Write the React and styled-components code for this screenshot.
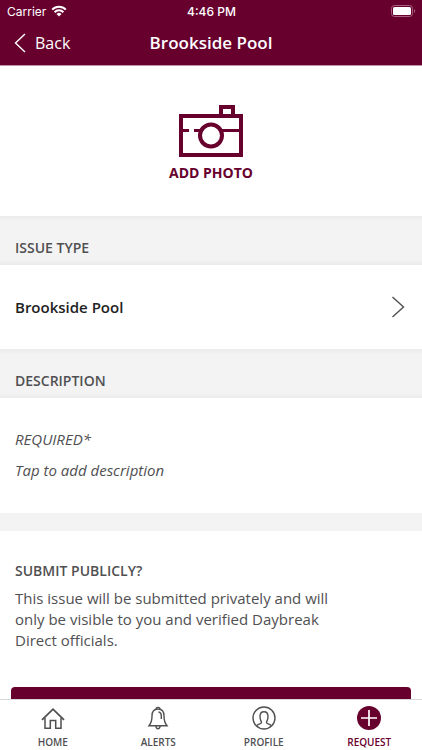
import React, { useState } from 'react'
import styled, { createGlobalStyle } from 'styled-components'

const tabs = [
  { id: 'home', label: 'HOME', Icon: HomeIcon },
  { id: 'alerts', label: 'ALERTS', Icon: BellIcon },
  { id: 'profile', label: 'PROFILE', Icon: ProfileIcon },
  { id: 'request', label: 'REQUEST', Icon: RequestIcon },
]

export default function App() {
  const [activeTab, setActiveTab] = useState('request')
  const [description, setDescription] = useState('')

  return (
    <>
      <GlobalStyle />
      <Screen>
        <Header>
          <StatusBar>
            <Carrier>
              Carrier
              <WifiIcon />
            </Carrier>
            <Clock>4:46 PM</Clock>
            <Battery>
              <BatteryIcon />
            </Battery>
          </StatusBar>
          <NavBar>
            <BackButton type="button">
              <svg width="12" height="20" viewBox="0 0 12 20" fill="none" stroke="currentColor" strokeWidth="1.4">
                <path d="M11 1L1.5 10L11 19" />
              </svg>
              Back
            </BackButton>
            <Title>Brookside Pool</Title>
          </NavBar>
        </Header>

        <Content>
          <PhotoButton type="button">
            <CameraIcon />
            ADD PHOTO
          </PhotoButton>

          <SectionHeader>ISSUE TYPE</SectionHeader>
          <IssueRow type="button">
            Brookside Pool
            <svg width="14" height="22" viewBox="0 0 14 22" fill="none" stroke="#505052" strokeWidth="1.4">
              <path d="M1.5 1L12.5 11L1.5 21" />
            </svg>
          </IssueRow>

          <SectionHeader>DESCRIPTION</SectionHeader>
          <DescriptionBox>
            <label htmlFor="description">REQUIRED*</label>
            <textarea
              id="description"
              placeholder="Tap to add description"
              value={description}
              onChange={(e) => setDescription(e.target.value)}
            />
          </DescriptionBox>

          <Divider />
          <SubmitSection>
            <SubmitTitle>SUBMIT PUBLICLY?</SubmitTitle>
            <SubmitText>
              This issue will be submitted privately and will only be visible to you and verified Daybreak Direct officials.
            </SubmitText>
            <SubmitButton type="button" aria-label="Submit" />
          </SubmitSection>
        </Content>

        <TabBar>
          {tabs.map(({ id, label, Icon }) => (
            <Tab key={id} type="button" $active={activeTab === id} onClick={() => setActiveTab(id)}>
              <Icon />
              {label}
            </Tab>
          ))}
        </TabBar>
      </Screen>
    </>
  )
}

function WifiIcon() {
  return (
    <svg width="16" height="12" viewBox="0 0 16 12" fill="none" stroke="#fff" strokeWidth="2">
      <path d="M1.2 4.6A9.6 9.6 0 0 1 14.8 4.6" />
      <path d="M3.6 7.2A6.2 6.2 0 0 1 12.4 7.2" />
      <path d="M8 11.5L5.5 9A3.5 3.5 0 0 1 10.5 9Z" fill="#fff" stroke="none" />
    </svg>
  )
}

function BatteryIcon() {
  return (
    <svg width="25" height="12" viewBox="0 0 25 12" fill="none">
      <rect x="0.5" y="0.5" width="21" height="11" rx="3" stroke="#a8607f" />
      <rect x="2" y="2" width="18" height="8" rx="1.5" fill="#fff" />
      <path d="M23 4.2C24.6 4.6 24.6 7.4 23 7.8Z" fill="#a8607f" />
    </svg>
  )
}

function CameraIcon() {
  return (
    <svg width="64" height="52" viewBox="0 0 64 52" fill="none" stroke="currentColor" strokeWidth="4">
      <path d="M2 11H62V50H2Z" />
      <path d="M42 11V2H54V11" />
      <path d="M2 25.5H10M15 25.5H22M43 25.5H62" strokeWidth="3" />
      <circle cx="32" cy="30.5" r="11" />
    </svg>
  )
}

function HomeIcon() {
  return (
    <svg width="24" height="24" viewBox="0 0 24 24" fill="none" stroke="currentColor" strokeWidth="1.5">
      <path d="M1 13.8L12 3.2L23 13.8" strokeWidth="1.8" />
      <path d="M4 12V22.2H9.3V14.5H14.7V22.2H20V12" />
    </svg>
  )
}

function BellIcon() {
  return (
    <svg width="24" height="24" viewBox="0 0 24 24" fill="none" stroke="currentColor" strokeWidth="1.4">
      <path d="M3 19.8C5.5 16.8 6 15 6 10C6 5.5 8.5 3 12 3S18 5.5 18 10C18 15 18.5 16.8 21 19.8Z" />
      <path d="M10 3.4C10 .7 14 .7 14 3.4" />
      <path d="M10 20C10 23.7 14 23.7 14 20" />
      <path d="M12.5 6C14.7 6.3 15.3 7.5 15.3 10V13" />
    </svg>
  )
}

function ProfileIcon() {
  return (
    <svg width="24" height="24" viewBox="0 0 24 24" fill="none" stroke="currentColor" strokeWidth="1.4">
      <circle cx="12" cy="12" r="11" />
      <path d="M4.5 19.8C5.5 18.2 9.5 18 9.5 16.5C9.5 15.2 8 14.5 8 10.5C8 7.5 9.5 5.8 12 5.8S16 7.5 16 10.5C16 14.5 14.5 15.2 14.5 16.5C14.5 18 18.5 18.2 19.5 19.8" />
    </svg>
  )
}

function RequestIcon() {
  return (
    <svg width="24" height="24" viewBox="0 0 24 24" fill="none">
      <circle cx="12" cy="12" r="12" fill="currentColor" />
      <path d="M12 4V20M4 12H20" stroke="#fff" strokeWidth="1.7" />
    </svg>
  )
}

const GlobalStyle = createGlobalStyle`
  * {
    box-sizing: border-box;
  }
  body {
    margin: 0;
    background: #fff;
    color: #505052;
    font-family: 'Open Sans', sans-serif;
  }
  button, textarea {
    margin: 0;
    padding: 0;
    border: 0;
    background: none;
    color: inherit;
    font-family: inherit;
  }
  button {
    cursor: pointer;
  }
  svg {
    display: block;
    flex-shrink: 0;
  }
`

const Screen = styled.div`
  display: flex;
  flex-direction: column;
  height: 100vh;
`

const Header = styled.header`
  flex-shrink: 0;
  background: #68002e;
  color: #fff;
  border-bottom: 1px solid #c391a7;
`

const StatusBar = styled.div`
  display: grid;
  grid-template-columns: 1fr auto 1fr;
  align-items: center;
  height: 22px;
  padding: 0 6px 0 7px;
  font-family: Inter, sans-serif;
  font-size: 12px;
`

const Carrier = styled.div`
  display: flex;
  align-items: center;
  gap: 5px;
`

const Clock = styled.div`
  font-weight: 500;
`

const Battery = styled.div`
  justify-self: end;
`

const NavBar = styled.div`
  display: grid;
  grid-template-columns: 1fr auto 1fr;
  align-items: center;
  height: 43px;
  padding: 0 14px 2px;
`

const BackButton = styled.button`
  display: flex;
  align-items: center;
  justify-self: start;
  gap: 9px;
  font-size: 16px;
`

const Title = styled.h1`
  margin: 0;
  font-size: 17px;
  font-weight: 600;
`

const Content = styled.main`
  flex: 1;
  min-height: 0;
  overflow-y: auto;
  scrollbar-width: none;
`

const PhotoButton = styled.button`
  display: flex;
  flex-direction: column;
  align-items: center;
  justify-content: center;
  gap: 6px;
  width: 100%;
  height: 150px;
  padding-top: 6px;
  color: #68002e;
  font-size: 14px;
  line-height: 20px;
  font-weight: 700;
`

const SectionHeader = styled.h2`
  margin: 0;
  padding: 22px 15px 7px;
  background: linear-gradient(#ebebeb, #f3f3f3 5px, #f3f3f3 44px, #ebebeb);
  font-size: 14px;
  line-height: 20px;
  font-weight: 600;
`

const IssueRow = styled.button`
  display: flex;
  align-items: center;
  justify-content: space-between;
  width: 100%;
  height: 84px;
  padding: 0 17px 0 15px;
  color: #222;
  font-size: 15px;
  line-height: 20px;
  font-weight: 600;
`

const DescriptionBox = styled.div`
  display: flex;
  flex-direction: column;
  gap: 11px;
  padding: 31px 15px 32px;
  font-size: 15px;
  line-height: 20px;
  font-style: italic;

  textarea {
    height: 21px;
    resize: none;
    outline: none;
    overflow: hidden;
    font-size: 15px;
    line-height: 20px;
    font-style: italic;
  }
  textarea::placeholder {
    color: #505052;
    opacity: 1;
  }
`

const Divider = styled.div`
  height: 18px;
  background: #f3f3f3;
`

const SubmitSection = styled.section`
  padding: 30px 11px 20px;
`

const SubmitTitle = styled.h2`
  margin: 0 4px 7px;
  font-size: 14px;
  line-height: 20px;
  font-weight: 600;
`

const SubmitText = styled.p`
  margin: 0 64px 36px 4px;
  font-size: 15px;
  line-height: 21px;
`

const SubmitButton = styled.button`
  display: block;
  width: 100%;
  height: 48px;
  border-radius: 4px;
  background: #68002e;
`

const TabBar = styled.nav`
  display: grid;
  grid-template-columns: repeat(4, 1fr);
  flex-shrink: 0;
  height: 51px;
  border-top: 1px solid #d8d8d8;
  background: #fff;
`

const Tab = styled.button`
  display: flex;
  flex-direction: column;
  align-items: center;
  gap: 5px;
  padding-top: 6px;
  color: ${(props) => (props.$active ? '#68002e' : '#505052')};
  font-size: 10px;
  line-height: 14px;
  font-weight: 600;
`
